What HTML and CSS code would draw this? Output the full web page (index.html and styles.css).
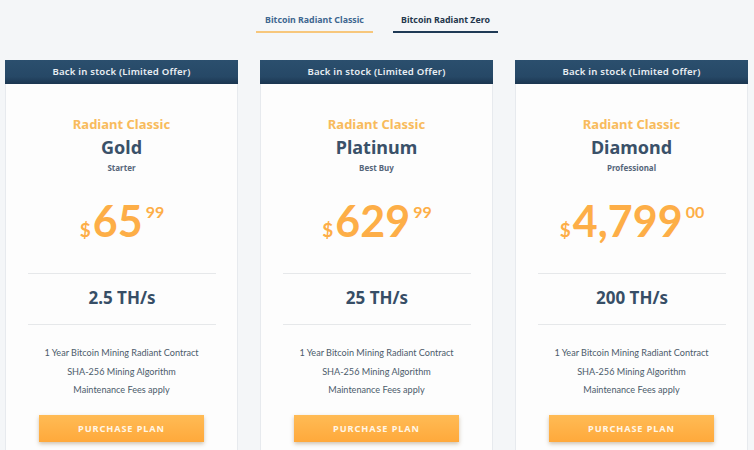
FILE: index.html
```html
<!DOCTYPE html>
<html>
<head>
<meta charset="utf-8">
<link rel="stylesheet" href="styles.css">
</head>
<body>
<div class="tabs">
  <div class="tab tab-active">Bitcoin Radiant Classic</div>
  <div class="tab tab-zero">Bitcoin Radiant Zero</div>
</div>
<div class="plans">
  <div class="card">
    <div class="card-head">Back in stock (Limited Offer)</div>
    <div class="card-body">
      <div class="series">Radiant Classic</div>
      <div class="name">Gold</div>
      <div class="tag">Starter</div>
      <div class="price"><span class="cur">$</span><span class="amt">65</span><span class="cents">99</span></div>
      <div class="rate">2.5 TH/s</div>
      <ul class="features">
        <li>1 Year Bitcoin Mining Radiant Contract</li>
        <li>SHA-256 Mining Algorithm</li>
        <li>Maintenance Fees apply</li>
      </ul>
      <div class="btn">PURCHASE PLAN</div>
    </div>
  </div>
  <div class="card">
    <div class="card-head">Back in stock (Limited Offer)</div>
    <div class="card-body">
      <div class="series">Radiant Classic</div>
      <div class="name">Platinum</div>
      <div class="tag">Best Buy</div>
      <div class="price"><span class="cur">$</span><span class="amt">629</span><span class="cents">99</span></div>
      <div class="rate">25 TH/s</div>
      <ul class="features">
        <li>1 Year Bitcoin Mining Radiant Contract</li>
        <li>SHA-256 Mining Algorithm</li>
        <li>Maintenance Fees apply</li>
      </ul>
      <div class="btn">PURCHASE PLAN</div>
    </div>
  </div>
  <div class="card">
    <div class="card-head">Back in stock (Limited Offer)</div>
    <div class="card-body">
      <div class="series">Radiant Classic</div>
      <div class="name">Diamond</div>
      <div class="tag">Professional</div>
      <div class="price"><span class="cur">$</span><span class="amt">4,799</span><span class="cents">00</span></div>
      <div class="rate">200 TH/s</div>
      <ul class="features">
        <li>1 Year Bitcoin Mining Radiant Contract</li>
        <li>SHA-256 Mining Algorithm</li>
        <li>Maintenance Fees apply</li>
      </ul>
      <div class="btn">PURCHASE PLAN</div>
    </div>
  </div>
</div>
</body>
</html>
```

FILE: styles.css
```css
html, body {
  margin: 0;
  padding: 0;
}
body {
  background: #f4f6f8;
  font-family: "Noto Sans", "Open Sans", sans-serif;
  color: #34495e;
  overflow: hidden;
}
.tabs {
  display: flex;
  justify-content: center;
  gap: 20px;
  padding-top: 13px;
}
.tab {
  font-size: 8.8px;
  font-weight: 700;
  line-height: 14px;
  padding-bottom: 4px;
  text-align: center;
}
.tab-active {
  width: 117px;
  color: #3f6790;
  border-bottom: 2px solid #f7c77c;
}
.tab-zero {
  width: 105px;
  color: #24384d;
  border-bottom: 2px solid #1f3a56;
}
.plans {
  display: grid;
  grid-template-columns: repeat(3, 233px);
  gap: 22px;
  padding: 0 6px 0 5px;
  margin-top: 27px;
}
.card-head {
  height: 24px;
  line-height: 24px;
  background: linear-gradient(#2b4f6e, #264866 70%, #1b3650);
  color: #e9eef3;
  font-size: 9.6px;
  font-weight: 600;
  text-align: center;
  letter-spacing: 0.2px;
}
.card-body {
  background: #fdfdfd;
  border: 1px solid #e7eaee;
  border-top: none;
  padding: 32px 0 30px;
  text-align: center;
}
.series {
  font-size: 13px;
  line-height: 16px;
  font-weight: 700;
  color: #f8bb5c;
}
.name {
  margin-top: 4px;
  font-size: 18px;
  line-height: 22px;
  font-weight: 700;
  color: #3a5169;
}
.tag {
  margin-top: 5px;
  font-size: 8px;
  line-height: 10px;
  font-weight: 700;
  color: #56667a;
}
.price {
  margin: 0 21px 0 22px;
  height: 101px;
  box-sizing: border-box;
  border-bottom: 1px solid #e6e8ea;
  display: flex;
  justify-content: center;
  align-items: flex-start;
  font-family: Lato, "Noto Sans", sans-serif;
  font-weight: 700;
  color: #fdae47;
  padding-top: 26px;
}
.cur {
  font-size: 19px;
  line-height: 20px;
  margin-top: 21px;
  margin-right: 2px;
}
.amt {
  font-size: 43px;
  line-height: 44px;
}
.cents {
  font-size: 16px;
  line-height: 16px;
  margin-left: 3px;
  margin-top: 5px;
}
.rate {
  margin: 0 21px 0 22px;
  height: 51px;
  box-sizing: border-box;
  border-bottom: 1px solid #e6e8ea;
  padding-top: 14px;
  font-size: 17px;
  line-height: 20px;
  font-weight: 700;
  color: #374e66;
}
.features {
  list-style: none;
  margin: 19px 0 0;
  padding: 0;
  font-family: Lato, "Noto Sans", sans-serif;
  font-size: 9.1px;
  line-height: 18.5px;
  color: #4c5b6b;
}
.btn {
  margin: 15px 33px 0 33px;
  height: 27px;
  line-height: 27px;
  background: linear-gradient(#ffbb55, #ffa93b);
  box-shadow: 0 2px 4px rgba(120, 90, 40, 0.35);
  color: #fff6e6;
  font-size: 9.2px;
  font-weight: 700;
  letter-spacing: 0.9px;
}
```
